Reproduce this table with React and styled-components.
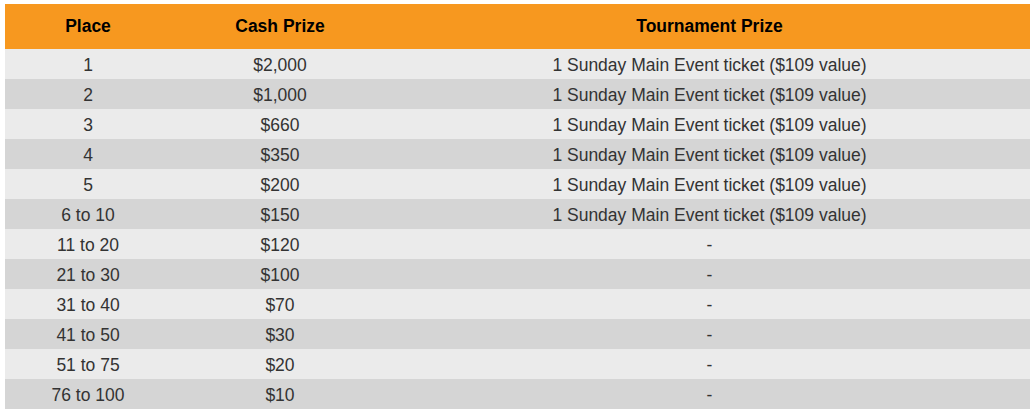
import React from "react";
import styled, { createGlobalStyle } from "styled-components";

const GlobalStyle = createGlobalStyle`
  body {
    margin: 0;
    background: #ffffff;
    font-family: "Liberation Sans", Arial, sans-serif;
  }
`;

const Page = styled.div`
  padding: 4px 3px 0 5px;
`;

const Table = styled.table`
  width: 100%;
  border-collapse: collapse;
  border-spacing: 0;
  table-layout: fixed;
  font-size: 17.5px;
`;

const HeadCell = styled.th`
  box-sizing: border-box;
  background-color: #f7981f;
  color: #000;
  font-weight: 700;
  height: 45px;
  padding: 0 0 1px;
  text-align: center;
  width: ${props => props.w || "auto"};
`;

const Row = styled.tr`
  background-color: ${props => (props.odd ? "#ebebeb" : "#d5d5d5")};
`;

const Cell = styled.td`
  box-sizing: border-box;
  color: #333;
  height: 30px;
  padding: 2px 0 0;
  text-align: center;
`;

const rows = [
  ["1", "$2,000", "1 Sunday Main Event ticket ($109 value)"],
  ["2", "$1,000", "1 Sunday Main Event ticket ($109 value)"],
  ["3", "$660", "1 Sunday Main Event ticket ($109 value)"],
  ["4", "$350", "1 Sunday Main Event ticket ($109 value)"],
  ["5", "$200", "1 Sunday Main Event ticket ($109 value)"],
  ["6 to 10", "$150", "1 Sunday Main Event ticket ($109 value)"],
  ["11 to 20", "$120", "-"],
  ["21 to 30", "$100", "-"],
  ["31 to 40", "$70", "-"],
  ["41 to 50", "$30", "-"],
  ["51 to 75", "$20", "-"],
  ["76 to 100", "$10", "-"],
];

const App = () => {
  return (
    <Page>
      <GlobalStyle />
      <Table>
        <thead>
          <tr>
            <HeadCell w="166px">Place</HeadCell>
            <HeadCell w="218px">Cash Prize</HeadCell>
            <HeadCell>Tournament Prize</HeadCell>
          </tr>
        </thead>
        <tbody>
          {rows.map((r, i) => (
            <Row key={r[0]} odd={i % 2 === 0}>
              <Cell>{r[0]}</Cell>
              <Cell>{r[1]}</Cell>
              <Cell>{r[2]}</Cell>
            </Row>
          ))}
        </tbody>
      </Table>
    </Page>
  );
};

export default App;
